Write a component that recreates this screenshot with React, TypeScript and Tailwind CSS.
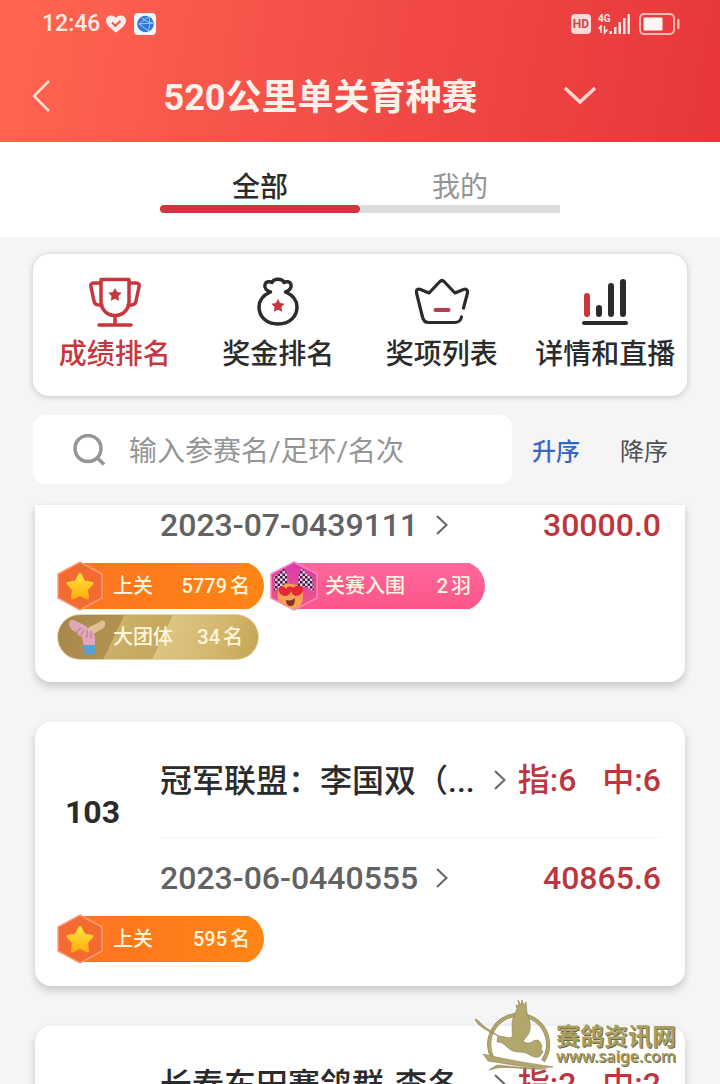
import type { ReactNode } from "react";

const RED = "#c8363d";

function StatusBar() {
  return (
    <div className="flex h-12 items-center justify-between pr-10 pl-[42px] text-[#ffeae5]">
      <div className="flex items-center gap-2">
        <span className="w-14 text-[23px] font-medium">12:46</span>
        <svg width="20" height="18" viewBox="0 0 20 18" aria-hidden="true">
          <path d="M10 17.5C5 14 0 10 0 5.5 0 2.500 2.300.6 5 .6c2 0 3.800.8 5 2.400C11.200 1.400 13 .6 15 .6c2.700 0 5 1.900 5 4.900 0 4.500-5 8.500-10 12z" fill="currentColor" />
          <path d="M6 7.500l3.300 3.300L14.500 6" fill="none" stroke="#dc5b4d" strokeWidth="2" />
        </svg>
        <svg width="22" height="22" viewBox="0 0 22 22" aria-hidden="true">
          <rect width="22" height="22" rx="4" fill="#f3f6ff" />
          <circle cx="11.500" cy="11" r="8.300" fill="#2f78d6" />
          <path d="M14.500 3.500L5 11l9 6.500M5 11l14-1M14.500 3.500c2 4 1.500 10-.5 15M8 5c3 3 8 5 11 5" fill="none" stroke="#b9d4f8" strokeWidth=".9" />
        </svg>
      </div>
      <div className="flex items-center gap-[7px]">
        <span className="flex h-5 w-5 items-center justify-center rounded-sm bg-[#ffd9d6] text-xs font-bold text-[#c94a4b]">HD</span>
        <svg width="34" height="22" viewBox="0 0 34 22" aria-label="4G" fill="currentColor">
          <text x="0" y="9" fontSize="10" fontWeight="700" fontFamily="Roboto, sans-serif">4G</text>
          <path d="M3 12v8M0.500 16l2.500-3M6.500 13v7l3-3.500" stroke="currentColor" strokeWidth="1.500" fill="none" />
          <rect x="11.500" y="18" width="2.500" height="3" />
          <rect x="16" y="14" width="2.500" height="7" />
          <rect x="20.500" y="9" width="2.500" height="12" />
          <rect x="25" y="5" width="2.500" height="16" />
          <rect x="29.500" y="1" width="2.500" height="20" />
        </svg>
        <svg width="41" height="22" viewBox="0 0 41 22" aria-hidden="true">
          <rect x="1" y="1" width="34" height="20" rx="4" fill="none" stroke="#ffb9b4" strokeWidth="2" />
          <rect x="4.500" y="4.500" width="19" height="13" rx="1" fill="#fff6f4" />
          <rect x="38" y="6" width="2.500" height="10" rx="1" fill="#ffb9b4" />
        </svg>
      </div>
    </div>
  );
}

function Chevron({ className }: { className: string }) {
  return (
    <svg width="12" height="20" viewBox="0 0 12 20" className={className} aria-hidden="true">
      <path d="M1 1l9.500 9L1 19" fill="none" stroke="#666" strokeWidth="2" />
    </svg>
  );
}

function Star({ cx, cy, r }: { cx: number; cy: number; r: number }) {
  const points = Array.from({ length: 10 }, (_, i) => {
    const a = -Math.PI / 2 + (i * Math.PI) / 5;
    const d = i % 2 ? r * 0.52 : r;
    return `${cx + d * Math.cos(a)},${cy + d * Math.sin(a)}`;
  }).join(" ");
  return <polygon points={points} fill={RED} />;
}

const trophy = (
  <svg width="52" height="50" viewBox="0 0 52 50" fill="none" stroke={RED} strokeWidth="3.500" strokeLinecap="round" strokeLinejoin="round">
    <path d="M12 2.500h28v22c0 8-6 14-14 14s-14-6-14-14zM12 6H5c-3 0-3.500 1.500-3 4l3 14c.5 3 2 4 4.500 4H13M40 6h7c3 0 3.500 1.500 3 4l-3 14c-.5 3-2 4-4.500 4H39M26 39v8M10 48h32" />
    <g stroke="none"><Star cx={26} cy={18} r={7} /></g>
  </svg>
);

const moneyBag = (
  <svg width="52" height="50" viewBox="0 0 52 50" fill="none" stroke="#2b2b2b" strokeWidth="3.500" strokeLinecap="round" strokeLinejoin="round">
    <path d="M18.500 15C15 14 12 11 13 7.500c1-3 4.500-3.500 7-2 1.500-4.500 10.500-4.500 12 0 2.500-1.500 6-1 7 2 1 3.500-2 6.500-5.500 7.500 7 3 11.500 8 11.500 15 0 10-8 17-19 17S7 40 7 30c0-7 4.500-12 11.500-15z" />
    <g stroke="none"><Star cx={26} cy={29} r={7} /></g>
  </svg>
);

const crown = (
  <svg width="54" height="50" viewBox="0 0 54 50" fill="none" stroke="#2b2b2b" strokeWidth="3.200" strokeLinecap="round" strokeLinejoin="round">
    <path d="M48.500 31l4-15c.5-3-1.500-4.500-4-3.500L40 16 29 4.500c-1.500-1.500-2.500-1.500-4 0L14 16l-8.500-3.500c-3-1-4.500.5-4 3.500L7.500 40c1 4 3 5.500 6 5.500h26c4 0 6-1 7-5.500" />
    <path d="M20.500 33h13" stroke="#b33d52" strokeWidth="4" />
  </svg>
);

const bars = (
  <svg width="48" height="50" viewBox="0 0 48 50" fill="none" stroke="#2b2b2b" strokeLinecap="round">
    <path d="M6 19v18" stroke={RED} strokeWidth="6" />
    <path d="M18 31v6M30 9v28M42 5v32" strokeWidth="6" />
    <path d="M3 46h42" strokeWidth="4" />
  </svg>
);

const menu: { label: string; icon: ReactNode; active?: boolean }[] = [
  { label: "成绩排名", icon: trophy, active: true },
  { label: "奖金排名", icon: moneyBag },
  { label: "奖项列表", icon: crown },
  { label: "详情和直播", icon: bars },
];

function StarHexagon() {
  return (
    <svg width="46" height="50" viewBox="0 0 46 50" aria-hidden="true" className="shrink-0">
      <defs>
        <linearGradient id="gold" x1="0" y1="0" x2="0" y2="1">
          <stop offset="0" stopColor="#ffe338" />
          <stop offset="1" stopColor="#ffae12" />
        </linearGradient>
      </defs>
      <path d="M23 1l22 12v24L23 49 1 37V13z" fill="#f46b31" stroke="#ff9b78" strokeWidth="1.500" />
      <path d="M23 13.500l4 7.500 8 1.500-5.500 6 1 8.500-7.500-3.500L15.500 37l1-8.500-5.500-6 8-1.500z" fill="url(#gold)" stroke="url(#gold)" strokeWidth="3" strokeLinejoin="round" />
    </svg>
  );
}

function RaceHexagon() {
  return (
    <svg width="48" height="50" viewBox="0 0 48 50" aria-hidden="true" className="shrink-0">
      <defs>
        <pattern id="check" width="5" height="5" patternUnits="userSpaceOnUse">
          <rect width="5" height="5" fill="#f3c8e4" />
          <path d="M0 0h2.500v2.500H0zM2.500 2.500H5V5H2.500z" fill="#3a2342" />
        </pattern>
        <linearGradient id="rose" x1="0" y1="0" x2="0" y2="1">
          <stop offset="0" stopColor="#d93bb0" />
          <stop offset="1" stopColor="#f5567e" />
        </linearGradient>
      </defs>
      <path d="M24 1l23 12v24L24 49 1 37V13z" fill="url(#rose)" stroke="#ff85bb" strokeWidth="1.500" />
      <path d="M13 7l4 6 2 12-8 1-7 4 1-9-1-5c4-2 7-5 9-9zM32 7l-3 7-1 11 8 1 8 5-1-9 1-5c-5-1-9-5-12-10z" fill="url(#check)" />
      <path d="M9 28c2-4 7-6 12-5 7 0 12 4 12 10 0 4 0 8-3 12l-6 4-15-8c-2-4-2-9 0-13z" fill="#f9a056" />
      <path d="M9 27c2-3 6-2 7 1 2-3 5-3 7-1 2-3 8-3 10 0 1 4-3 8-7 8-3 0-4-3-5-5-1 3-3 5-6 5-4 0-7-4-6-8z" fill="#e22832" />
      <path d="M16 39c4 1 7 0 9-2 0 5-1 8-4 8s-5-2-5-6z" fill="#87341f" />
    </svg>
  );
}

function HandsIcon() {
  return (
    <svg width="38" height="36" viewBox="0 0 38 36" aria-hidden="true">
      <path d="M1 3c2-3 5-2 7-1l10 5 4 4-1 6-4 2-7-3-1-3-4-1C2 9 0 6 1 3z" fill="#dda7b6" />
      <path d="M37 4c1 3-2 6-5 7l-8 5-5-1 2-7 7-3 5-3c2-1 4 0 4 2z" fill="#e3bf91" />
      <path d="M15 12l3-3 2 4 4-1 3 5v10H16l-2-9z" fill="#e2a5bb" />
      <path d="M15 26h12l1 8-6 2-6-2z" fill="#5b9ed2" />
      <path d="M9 13l4-4M13 16l3-5M19 11v8M23 12v7" stroke="#b9789a" strokeWidth="1" />
    </svg>
  );
}

type BadgeKind = "pass" | "race" | "team";
type BadgeData = { kind: BadgeKind; label: string; value: string; unit: string };

function Badge({ kind, label, value, unit }: BadgeData) {
  const text = (
    <>
      <span>{label}</span>
      <span className="ml-auto flex gap-[3px]">
        <span>{value}</span>
        <span>{unit}</span>
      </span>
    </>
  );
  if (kind === "team") {
    return (
      <li className="flex h-[46px] w-[202px] items-center gap-[7px] rounded-full border border-[#e4d5a8] bg-[linear-gradient(115deg,#a8854a_0%,#b1924f_30%,#cbb068_30%,#c5a85c_52%,#ddc585_52%,#d3b76d_78%,#c3a352_100%)] pr-[15px] pl-[10px]">
        <HandsIcon />
        {text}
      </li>
    );
  }
  if (kind === "race") {
    return (
      <li className="flex h-[50px] w-[215px] items-center gap-[7px] rounded-r-full bg-[linear-gradient(#ff669c,#fb5689)] bg-[length:190px_46px] bg-right bg-no-repeat pr-[14px]">
        <RaceHexagon />
        {text}
      </li>
    );
  }
  return (
    <li className="flex h-[50px] w-[207px] items-center gap-[10px] rounded-r-full bg-[linear-gradient(90deg,#ff7420,#ff8515)] bg-[length:184px_46px] bg-right bg-no-repeat pr-[14px]">
      <StarHexagon />
      {text}
    </li>
  );
}

type Entry = {
  rank?: string;
  owner?: string;
  assigned?: string;
  hit?: string;
  ring?: string;
  prize?: string;
  badges: BadgeData[];
};

const entries: Entry[] = [
  {
    ring: "2023-07-0439111",
    prize: "30000.0",
    badges: [
      { kind: "pass", label: "上关", value: "5779", unit: "名" },
      { kind: "race", label: "关赛入围", value: "2", unit: "羽" },
      { kind: "team", label: "大团体", value: "34", unit: "名" },
    ],
  },
  {
    rank: "103",
    owner: "冠军联盟：李国双（...",
    assigned: "指:6",
    hit: "中:6",
    ring: "2023-06-0440555",
    prize: "40865.6",
    badges: [{ kind: "pass", label: "上关", value: "595", unit: "名" }],
  },
  { owner: "长春东田赛鸽群-李冬", assigned: "指:2", hit: "中:2", badges: [] },
];

function EntryCard({ entry }: { entry: Entry }) {
  return (
    <li className={`bg-white px-[22px] pb-[22px] shadow-[0_4px_9px_rgba(0,0,0,0.2)] ${entry.owner ? "rounded-2xl" : "rounded-b-2xl"}`}>
      <div className="flex">
        <div className="w-[103px] shrink-0">
          {entry.rank && <p className="pt-[70px] pl-2 text-[32px] leading-10 font-bold text-[#2b2b2b]">{entry.rank}</p>}
        </div>
        <div className="min-w-0 flex-1 pr-[2px]">
          {entry.owner && (
            <div className="flex h-[116px] items-center border-b border-[#f4f4f4] text-[32px] font-medium whitespace-nowrap">
              <span className="truncate pt-[3px] text-[#2b2b2b]">{entry.owner}</span>
              <Chevron className="mr-3 ml-auto shrink-0" />
              <span className="flex shrink-0 gap-[26px] text-[#bd353d]">
                <span>{entry.assigned}</span>
                <span>{entry.hit}</span>
              </span>
            </div>
          )}
          {entry.ring && (
            <div className={`flex h-10 items-center text-[32px] font-medium text-[#626262] ${entry.owner ? "mt-5" : ""}`}>
              <span>{entry.ring}</span>
              <Chevron className="ml-[18px]" />
              <span className="ml-auto text-[#bd353d]">{entry.prize}</span>
            </div>
          )}
        </div>
      </div>
      <ul className="mt-4 flex flex-wrap gap-x-[6px] gap-y-[3px] text-xl font-medium text-[#fff6dc]">
        {entry.badges.map((badge) => (
          <Badge key={badge.label} {...badge} />
        ))}
      </ul>
    </li>
  );
}

function Watermark() {
  return (
    <div className="absolute right-11 bottom-0 flex h-[86px] items-start gap-[2px] text-[#aa9f62] [text-shadow:1px_1px_0_#6f6840]">
      <svg width="79" height="72" viewBox="0 0 79 72" aria-hidden="true" className="mt-[2px]">
        <path d="M17 57A29.500 29.500 0 1 1 68 61" fill="none" stroke="#8b814f" strokeWidth="4" />
        <path d="M17 57A29.500 29.500 0 1 1 68 61" fill="none" stroke="#b1a66c" strokeWidth="3" />
        <g fill="#b1a66c" stroke="#8b814f" strokeWidth=".6">
          <path d="M0 19c4 1 6 5 10 8l14 9c5 0 9 3 13 1 1-4-1-12 1-19l4-9-1-4 3 1-1-6 3 5 1-5 2 6 2-4 1 11c3 7 5 15 1 22l-5 6c2 2 6 3 9 1 2-2 6-3 8 0l2 4-1 3 2 3-3 4-2 1c-4 1-8-2-12-4-5-2-12 1-19-6-4-4-6-5-10-5l1-6C13 31 2 26 0 19z" />
          <path d="M8 54c20 5 45 9 70 13-24 2-44-3-65-6zM14 70l8-5c18 2 34 3 50 4-20 1-38-3-50-1z" />
        </g>
      </svg>
      <div className="pt-[26px] font-['Noto_Sans','Noto_Sans_CJK_SC',sans-serif]">
        <p className="text-2xl leading-6 font-bold">赛鸽资讯网</p>
        <p className="text-base leading-4 font-medium">www.saige.com</p>
      </div>
    </div>
  );
}

export default function App() {
  return (
    <div className="relative flex h-screen flex-col overflow-hidden bg-[#f5f5f5] font-['Roboto','Noto_Sans_CJK_SC',sans-serif]">
      <header className="h-[142px] shrink-0 bg-[linear-gradient(100deg,#ff6650,#f14a46_55%,#e8363b)]">
        <StatusBar />
        <div className="flex h-24 items-center">
          <button type="button" aria-label="返回" className="pl-8">
            <svg width="18" height="32" viewBox="0 0 18 32" fill="none" stroke="#ffe0d0" strokeWidth="2.500">
              <path d="M17 1L2 16l15 15" />
            </svg>
          </button>
          <h1 className="flex-1 pt-[3px] pl-[28px] text-center text-4xl font-bold text-[#fff1ea]">520公里单关育种赛</h1>
          <button type="button" aria-label="展开" className="pr-[123px]">
            <svg width="34" height="20" viewBox="0 0 34 20" fill="none" stroke="#ffd2cb" strokeWidth="3.500">
              <path d="M2 2l15 14L32 2" />
            </svg>
          </button>
        </div>
      </header>

      <nav className="flex h-[95px] shrink-0 justify-center bg-white pt-7 text-[28px]">
        <button type="button" className="flex w-[200px] flex-col items-center font-medium text-[#2b2b2b]">
          <span className="leading-[35px]">全部</span>
          <span className="h-2 w-full rounded-full bg-[#cf353c]" />
        </button>
        <button type="button" className="flex w-[200px] flex-col items-center text-[#949494]">
          <span className="leading-[35px]">我的</span>
          <span className="h-2 w-full bg-[#dcdcdc]" />
        </button>
      </nav>

      <section className="mx-[33px] mt-[17px] flex h-[142px] shrink-0 rounded-2xl bg-white shadow-[0_1px_6px_rgba(0,0,0,0.2)]">
        {menu.map(({ label, icon, active }) => (
          <button
            type="button"
            key={label}
            className={`flex flex-1 flex-col items-center pt-[23px] text-[28px] leading-9 font-medium whitespace-nowrap ${active ? "text-[#c8363d]" : "text-[#2b2b2b]"}`}
          >
            {icon}
            <span className="mt-[10px]">{label}</span>
          </button>
        ))}
      </section>

      <div className="mt-[19px] mr-[52px] ml-[33px] flex shrink-0 items-center text-2xl">
        <label className="flex h-[69px] flex-1 items-center gap-6 rounded-xl bg-white pl-10">
          <svg width="32" height="32" viewBox="0 0 32 32" fill="none" stroke="#959595" strokeWidth="3.500" aria-hidden="true">
            <circle cx="15" cy="14.500" r="13" />
            <path d="M24 23.500l7 7" />
          </svg>
          <input
            type="search"
            aria-label="搜索"
            placeholder="输入参赛名/足环/名次"
            className="w-full min-w-0 flex-1 pt-1 text-[28px] text-[#555] outline-none placeholder:text-[#959595]"
          />
        </label>
        <button type="button" className="ml-5 pt-1 font-medium text-[#3568c6]">升序</button>
        <button type="button" className="ml-10 pt-1 text-[#505050]">降序</button>
      </div>

      <main className="-mt-px min-h-0 flex-1 overflow-hidden pt-[22px]">
        <ul className="flex flex-col gap-10 px-[35px]">
          {entries.map((entry, i) => (
            <EntryCard key={i} entry={entry} />
          ))}
        </ul>
      </main>
      <Watermark />
    </div>
  );
}
